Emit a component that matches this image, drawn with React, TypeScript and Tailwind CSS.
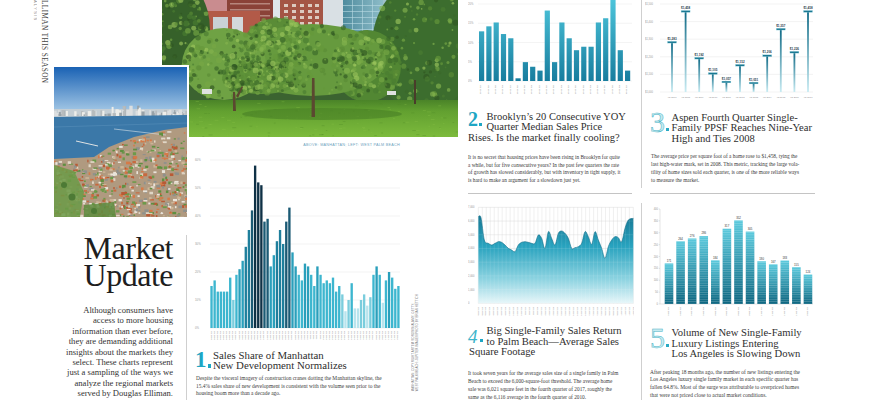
import React from 'react'

function rng(seed: number) {
  let s = seed
  return () => {
    s = (s * 16807) % 2147483647
    return (s - 1) / 2147483646
  }
}

function smooth(p: number[][]) {
  let d = `M${p[0][0]},${p[0][1]}`
  for (let i = 0; i < p.length - 1; i++) {
    const p0 = p[i - 1] || p[i]
    const p1 = p[i]
    const p2 = p[i + 1]
    const p3 = p[i + 2] || p2
    const c1x = p1[0] + (p2[0] - p0[0]) / 6
    const c1y = p1[1] + (p2[1] - p0[1]) / 6
    const c2x = p2[0] - (p3[0] - p1[0]) / 6
    const c2y = p2[1] - (p3[1] - p1[1]) / 6
    d += ` C${c1x},${c1y} ${c2x},${c2y} ${p2[0]},${p2[1]}`
  }
  return d
}

const sans = { fontFamily: 'Liberation Sans, Arial, sans-serif' }

// ---------- charts ----------

const manhattan = [15, 17, 13, 13, 13, 13, 18, 10, 19, 21, 24, 29, 35, 42, 58, 52, 51, 38, 39, 22, 26, 31, 35, 30, 38, 43, 27, 22, 19, 17, 23, 22, 19, 15, 22, 19, 16, 17, 16, 18, 13, 15, 12, 6, 10, 16, 7, 7, 10, 12, 8, 11, 19, 22, 19, 9, 17, 20, 18, 14, 15]

function barColor(v: number) {
  if (v >= 45) return '#0f3146'
  if (v >= 36) return '#1b5a74'
  if (v >= 28) return '#1f7f9c'
  if (v >= 20) return '#2a9fbb'
  if (v >= 13) return '#3db6cf'
  if (v >= 10) return '#7bcddd'
  return '#b8e4ed'
}

function Chart1() {
  const x0 = 17
  const pitch = 190 / 61
  const y = (v: number) => 173 - v * 2.8
  return (
    <svg width={215} height={190} className="block" style={sans}>
      {[0, 10, 20, 30, 40, 50, 60].map((v) => (
        <g key={v}>
          <line x1={x0} x2={207} y1={y(v)} y2={y(v)} stroke="#dedede" strokeWidth={0.4} />
          <text x={2} y={y(v) + 1} fontSize={2.8} fill="#9a9a9a">{v}%</text>
        </g>
      ))}
      {manhattan.map((v, i) => (
        <rect key={i} x={x0 + i * pitch + 0.35} y={y(v)} width={2.35} height={v * 2.8} fill={barColor(v)} />
      ))}
      {manhattan.map((_, i) => (
        <text key={'t' + i} transform={`translate(${x0 + i * pitch + 0.5},176) rotate(90)`} fontSize={2.3} fill="#8c8c8c">
          {`${(i % 4) + 1}Q ${2003 + Math.floor(i / 4)}`}
        </text>
      ))}
    </svg>
  )
}

function Chart2() {
  const data = [12.9, 14.2, 15.2, 12.2, 11.1, 0.7, 4.9, 3.7, 2.7, 18.3, 4.9, 15.2, 11.1, 8, 8.9, 8.9, 15.2, 16.3, 22, 8, 2.7]
  const y = (v: number) => 81 - v * 3.85
  return (
    <svg width={164} height={100} className="block" style={sans}>
      <defs>
        <linearGradient id="g2" x1="0" y1="0" x2="0" y2="81" gradientUnits="userSpaceOnUse">
          <stop offset="0" stopColor="#4cc4da" />
          <stop offset="1" stopColor="#187d9e" />
        </linearGradient>
      </defs>
      {[0, 5, 10, 15, 20].map((v) => (
        <g key={v}>
          <line x1={10} x2={164} y1={y(v)} y2={y(v)} stroke="#e2e2e2" strokeWidth={0.4} />
          <text x={0} y={y(v) + 1} fontSize={2.7} fill="#9a9a9a">{v}%</text>
        </g>
      ))}
      {data.map((v, i) => (
        <rect key={i} x={11 + i * 7.3} y={y(v)} width={5.2} height={81 - y(v)} fill="url(#g2)" />
      ))}
      {data.map((_, i) => (
        <text key={'t' + i} transform={`translate(${12.3 + i * 7.3},85) rotate(90)`} fontSize={2.4} fill="#8c8c8c">
          {`${(i % 4) + 1}Q ${2013 + Math.floor(i / 4)}`}
        </text>
      ))}
    </svg>
  )
}

function Chart3() {
  const data = [1283, 1458, 1192, 1105, 1057, 1152, 1051, 1206, 1357, 1226, 1458]
  const y = (v: number) => 92 - (v - 1000) * 0.176
  return (
    <svg width={170} height={100} className="block" style={sans}>
      <defs>
        <linearGradient id="g3" x1="0" y1="0" x2="0" y2="1">
          <stop offset="0" stopColor="#0f6a86" />
          <stop offset="1" stopColor="#c9ecf3" />
        </linearGradient>
      </defs>
      {[1000, 1100, 1200, 1300, 1400, 1500].map((v) => (
        <g key={v}>
          <line x1={15} x2={168} y1={y(v)} y2={y(v)} stroke="#e0e0e0" strokeWidth={0.4} />
          <text x={0} y={y(v) + 1} fontSize={2.6} fill="#9a9a9a">{`$${v.toLocaleString('en-US')}`}</text>
        </g>
      ))}
      {data.map((v, i) => {
        const cx = 27 + i * 13.6
        return (
          <g key={i}>
            <rect x={cx - 0.9} y={y(v)} width={1.8} height={92 - y(v)} fill="url(#g3)" />
            <rect x={cx - 4.5} y={y(v) - 0.9} width={9} height={1.8} fill="#1b7892" stroke="#9fdbe6" strokeWidth={0.3} />
            <text x={cx} y={y(v) - 2.4} fontSize={3} fontWeight="bold" fill="#1f3c4a" textAnchor="middle">{`$${v.toLocaleString('en-US')}`}</text>
            <text x={cx} y={98} fontSize={2.3} fill="#8c8c8c" textAnchor="middle">{`4Q ${2007 + i}`}</text>
          </g>
        )
      })}
    </svg>
  )
}

const area4 = [[70, 65], [78, 68], [88, 135], [100, 145], [110, 150], [120, 145], [130, 140], [140, 142], [150, 150], [160, 160], [170, 165], [180, 170], [190, 150], [200, 142], [210, 140], [220, 142], [230, 145], [240, 145], [250, 120], [260, 130], [270, 160], [280, 110], [290, 130], [300, 150], [310, 115], [320, 108], [330, 115], [340, 130], [350, 160], [360, 158], [370, 155], [380, 145], [390, 110], [400, 125], [410, 148], [420, 110], [430, 135], [440, 160], [450, 190], [460, 155], [470, 135], [480, 125], [490, 128], [500, 140], [510, 100], [520, 75], [535, 70]].map(([x, y]) => [x / 3 - 13, y / 3 - 5])

function Chart4() {
  const base = 103.3
  const y = (v: number) => base - v * 13.71
  const line = smooth(area4)
  const first = area4[0][0]
  const last = area4[area4.length - 1][0]
  const areaPath = `${line} L${last},${base} L${first},${base} Z`
  const vlines = Array.from({ length: 40 }, (_, i) => first + i * ((last - first) / 39))
  return (
    <svg width={166} height={120} className="block" style={sans}>
      <defs>
        <linearGradient id="g4" x1="0" y1="15" x2="0" y2="103" gradientUnits="userSpaceOnUse">
          <stop offset="0" stopColor="#177793" />
          <stop offset="0.35" stopColor="#27a2be" />
          <stop offset="0.72" stopColor="#8ad2e0" />
          <stop offset="1" stopColor="#e6f6f9" />
        </linearGradient>
        <clipPath id="c4">
          <path d={areaPath} />
        </clipPath>
      </defs>
      {[0, 1, 2, 3, 4, 5, 6, 7].map((v) => (
        <g key={v}>
          <line x1={first} x2={last} y1={y(v)} y2={y(v)} stroke="#d4d4d4" strokeWidth={0.4} />
          <text x={0} y={y(v) + 1} fontSize={2.6} fill="#9a9a9a">{v === 0 ? '0' : `${v},000`}</text>
        </g>
      ))}
      {vlines.map((x, i) => (
        <line key={i} x1={x} x2={x} y1={y(7)} y2={base} stroke="#d4d4d4" strokeWidth={0.35} />
      ))}
      <path d={areaPath} fill="url(#g4)" />
      <g clipPath="url(#c4)">
        {vlines.map((x, i) => (
          <line key={i} x1={x} x2={x} y1={0} y2={base} stroke="#ffffff" strokeOpacity={0.3} strokeWidth={0.35} />
        ))}
        {[1, 2, 3, 4, 5, 6].map((v) => (
          <line key={v} x1={first} x2={last} y1={y(v)} y2={y(v)} stroke="#ffffff" strokeOpacity={0.3} strokeWidth={0.35} />
        ))}
      </g>
      <path d={line} fill="none" stroke="#136f8a" strokeWidth={0.6} />
      {vlines.map((x, i) => (
        <text key={'t' + i} transform={`translate(${x - 0.8},107) rotate(90)`} fontSize={2.2} fill="#8c8c8c">
          {`${(i % 4) + 1}Q ${2008 + Math.floor(i / 4)}`}
        </text>
      ))}
    </svg>
  )
}

function Chart5() {
  const data = [171, 264, 276, 286, 184, 317, 352, 305, 180, 167, 183, 155, 124]
  const base = 104
  const y = (v: number) => base - v * 0.2375
  return (
    <svg width={170} height={120} className="block" style={sans}>
      <defs>
        <linearGradient id="g5" x1="0" y1="0" x2="0" y2="1">
          <stop offset="0" stopColor="#5ccadd" />
          <stop offset="1" stopColor="#0e6680" />
        </linearGradient>
        <pattern id="p5" width="4" height="2.3" patternUnits="userSpaceOnUse">
          <rect width="4" height="0.45" fill="#ffffff" opacity="0.35" />
        </pattern>
      </defs>
      <line x1={15} x2={15} y1={y(400)} y2={base} stroke="#bdbdbd" strokeWidth={0.4} />
      <line x1={15} x2={168} y1={base} y2={base} stroke="#bdbdbd" strokeWidth={0.4} />
      {[0, 50, 100, 150, 200, 250, 300, 350, 400].map((v) => (
        <g key={v}>
          <line x1={13.8} x2={15} y1={y(v)} y2={y(v)} stroke="#bdbdbd" strokeWidth={0.4} />
          <text x={13} y={y(v) + 1} fontSize={2.6} fill="#9a9a9a" textAnchor="end">{v}</text>
        </g>
      ))}
      {data.map((v, i) => {
        const cx = 24 + i * 11.58
        return (
          <g key={i}>
            <rect x={cx - 4.3} y={y(v)} width={8.6} height={base - y(v)} fill="url(#g5)" />
            <rect x={cx - 4.3} y={y(v)} width={8.6} height={base - y(v)} fill="url(#p5)" />
            <text x={cx} y={y(v) - 1.6} fontSize={2.8} fill="#333" textAnchor="middle">{v}</text>
            <text transform={`translate(${cx - 0.8},107) rotate(90)`} fontSize={2.3} fill="#8c8c8c">
              {`${(i % 4) + 1}Q ${2015 + Math.floor(i / 4)}`}
            </text>
          </g>
        )
      })}
    </svg>
  )
}

// ---------- photos ----------

function ParkPhoto() {
  const r = rng(11)
  const pal = ['#4a7c31', '#65983b', '#84b44e', '#5a8c35', '#3b6829', '#76a845', '#9bc45c', '#2f5622']
  const blobs: [number, number, number, number, string][] = [
    [16, 30, 32, 50, '#36612a'],
    [262, 46, 52, 66, '#3c6d2e'],
    [116, 44, 34, 26, '#5a8c37'],
    [205, 66, 34, 36, '#528733'],
    [150, 60, 74, 36, '#669a3e'],
    [62, 64, 42, 36, '#6fa244'],
    [100, 78, 40, 16, '#5e9239'],
  ]
  const dots: React.ReactNode[] = []
  blobs.forEach(([cx, cy, rx, ry], bi) => {
    for (let i = 0; i < 150; i++) {
      const a = r() * Math.PI * 2
      const d = Math.sqrt(r())
      dots.push(
        <circle
          key={bi + '-' + i}
          cx={cx + Math.cos(a) * rx * d}
          cy={cy + Math.sin(a) * ry * d}
          r={0.8 + r() * 2.2}
          fill={pal[Math.floor(r() * pal.length)]}
          opacity={0.65}
        />,
      )
    }
  })
  const grassDots: React.ReactNode[] = []
  for (let i = 0; i < 140; i++) {
    grassDots.push(
      <rect key={i} x={r() * 296} y={101 + r() * 36} width={1 + r() * 3} height={0.6} fill={r() > 0.5 ? '#8cc447' : '#4f8a28'} opacity={0.5} />,
    )
  }
  return (
    <svg width={296} height={137} className="block shrink-0">
      <defs>
        <linearGradient id="grass" x1="0" y1="0" x2="0" y2="1">
          <stop offset="0" stopColor="#4a8328" />
          <stop offset="0.3" stopColor="#62a030" />
          <stop offset="1" stopColor="#7dbb3d" />
        </linearGradient>
        <linearGradient id="glass" x1="0" y1="0" x2="1" y2="0">
          <stop offset="0" stopColor="#4f8c9e" />
          <stop offset="1" stopColor="#8dbcc8" />
        </linearGradient>
      </defs>
      <rect width={296} height={137} fill="#dfe7ea" />
      <rect x={41} y={0} width={24} height={14} fill="#c98c8f" />
      <rect x={65} y={0} width={46} height={32} fill="#8a4238" />
      {[3, 9, 15, 21, 27].map((wy) => (
        <rect key={wy} x={68} y={wy} width={40} height={1.5} fill="#c9a49a" opacity={0.7} />
      ))}
      <rect x={26} y={11} width={72} height={30} fill="#b25a48" />
      <rect x={31} y={17} width={15} height={19} fill="#d6dcdf" />
      <rect x={51} y={17} width={15} height={19} fill="#c9d1d6" />
      <rect x={70} y={17} width={11} height={19} fill="#d3d9dc" />
      <rect x={118} y={0} width={43} height={32} fill="#a45545" />
      {[4, 10, 16, 22].map((wy) =>
        [122, 130, 138, 146, 153].map((wx) => <rect key={wx + '-' + wy} x={wx} y={wy} width={4} height={3} fill="#dccac0" />),
      )}
      <rect x={161} y={0} width={20} height={32} fill="#d9e0e4" />
      <rect x={181} y={0} width={40} height={36} fill="url(#glass)" />
      {[5, 11, 17, 23, 29].map((gy) => (
        <rect key={gy} x={181} y={gy} width={40} height={0.6} fill="#b9dbe3" />
      ))}
      {[190, 200, 210].map((gx) => (
        <rect key={gx} x={gx} y={0} width={0.6} height={36} fill="#b9dbe3" />
      ))}
      <rect x={221} y={0} width={22} height={18} fill="#9dc0c9" />
      <rect x={20} y={84} width={270} height={18} fill="#3b6330" />
      <rect x={238} y={0} width={58} height={100} fill="#3a6a2c" />
      <rect x={0} y={0} width={20} height={75} fill="#33602a" />
      {blobs.map(([cx, cy, rx, ry, c], i) => (
        <ellipse key={i} cx={cx} cy={cy} rx={rx} ry={ry} fill={c} />
      ))}
      {dots}
      <rect x={40} y={89} width={10} height={5} fill="#dfe2e0" />
      <rect x={225} y={91} width={9} height={4} fill="#dfe2e0" />
      <rect x={0} y={100} width={296} height={37} fill="url(#grass)" />
      {grassDots}
      <ellipse cx={160} cy={114} rx={80} ry={6} fill="#457c24" opacity={0.55} />
      <path d="M150,78 L152.5,78 L153,117 L149.5,117 Z" fill="#5b4830" />
      <path d="M71,92 L73,92 L74,111 L71,111 Z" fill="#5b4830" />
      <path d="M74,96 L80,86 L81,87 L76,98 Z" fill="#5b4830" />
      <path d="M252,80 L254,80 L254,104 L252,104 Z" fill="#4a3c2a" />
    </svg>
  )
}

function AerialPhoto() {
  const r = rng(5)
  const waterEdge = (x: number) => {
    const pts = [[0, 92], [40, 90], [55, 80], [80, 70], [110, 63], [133, 60]]
    for (let i = 0; i < pts.length - 1; i++) {
      const [x1, y1] = pts[i]
      const [x2, y2] = pts[i + 1]
      if (x >= x1 && x <= x2) return y1 + ((y2 - y1) * (x - x1)) / (x2 - x1)
    }
    return 60
  }
  const pal = ['#c7693f', '#b85a35', '#e9e4da', '#e0d6c6', '#cdb597', '#5f8f40', '#8f918c', '#d57a48', '#6d9a4a']
  const blds: React.ReactNode[] = []
  for (let i = 0; i < 900; i++) {
    const x = r() * 133
    const y = 58 + r() * 94
    if (y < waterEdge(x) + 1) continue
    const w = 1.2 + r() * 3
    const h = 1 + r() * 2
    blds.push(<rect key={i} x={x} y={y} width={w} height={h} fill={pal[Math.floor(r() * pal.length)]} />)
  }
  const sky: React.ReactNode[] = []
  for (let i = 0; i < 80; i++) {
    const x = r() * 133
    const h = 1.5 + r() * (x > 55 && x < 85 ? 9 : 5)
    sky.push(<rect key={i} x={x} y={49 - h} width={1 + r() * 2.5} height={h} fill={['#dcdfe0', '#b7bcbe', '#eeeeea', '#98a2a8'][i % 4]} />)
  }
  return (
    <svg width={133} height={150} className="block">
      <defs>
        <linearGradient id="sky" x1="0" y1="0" x2="0" y2="1">
          <stop offset="0" stopColor="#1a62b4" />
          <stop offset="1" stopColor="#a8cbe7" />
        </linearGradient>
      </defs>
      <rect width={133} height={150} fill="#b09a80" />
      <rect width={133} height={46} fill="url(#sky)" />
      <rect y={42} width={133} height={8} fill="#c4ced4" />
      {sky}
      <path d="M0,50 L133,48 L133,60 L110,63 L80,70 L55,80 L40,90 L0,92 Z" fill="#3b78a8" />
      <path d="M0,60 L133,56" stroke="#5d93bd" strokeWidth={0.5} />
      <path d="M60,62 L112,68" stroke="#d9e3ea" strokeWidth={0.6} />
      <path d="M22,74 L44,79" stroke="#dfe3e4" strokeWidth={1} />
      {blds}
      <path d="M0,98 L20,104 L30,125 L26,150 L0,150 Z" fill="#6b9a46" opacity={0.85} />
      <path d="M30,138 L60,135 L62,150 L30,150 Z" fill="#5e8c3e" opacity={0.85} />
      <circle cx={10} cy={118} r={3} fill="#4d7a35" />
      <circle cx={18} cy={130} r={3.5} fill="#4d7a35" />
      <circle cx={40} cy={144} r={3} fill="#4d7a35" />
    </svg>
  )
}

// ---------- text bits ----------

function Body({ lines, cls }: { lines: string[]; cls: string }) {
  return (
    <div className={`text-[#3a3a3a] whitespace-nowrap ${cls}`}>
      {lines.map((l, i) => (
        <div key={i}>{l}</div>
      ))}
    </div>
  )
}

const outline = 'text-[#c6eaf0] [-webkit-text-stroke:0.5px_#48b3c6]'

export default function App() {
  return (
    <div className="w-[870px] h-[400px] overflow-hidden bg-white flex font-['Liberation_Serif',serif] text-[#2e2e2e]">
      {/* left page */}
      <div className="relative w-[458px] h-[400px] shrink-0 flex flex-col">
        <div className="flex h-[137px] shrink-0">
          <div className="w-[162px] flex pl-[33px] gap-[3px]">
            <div className="[writing-mode:vertical-rl] text-[4px] tracking-[1.3px] text-[#8a8a8a] leading-none h-[26px] overflow-hidden font-['Liberation_Sans',sans-serif]">
              ALYSIS
            </div>
            <div className="[writing-mode:vertical-rl] text-[7.2px] tracking-[0.45px] text-[#444] leading-none whitespace-nowrap">
              LLIMAN THIS SEASON
            </div>
          </div>
          <ParkPhoto />
        </div>
        <div className="absolute left-[52px] top-[65px] bg-white p-[2px]">
          <AerialPhoto />
        </div>
        <div className="flex flex-1">
          <div className="w-[187px] shrink-0 pt-[91px]">
            <div className="h-full border-r border-[#cfcfcf] pr-[13px] text-right">
              <div className="mt-[7px] text-[32px] leading-[27px] tracking-[-0.5px] text-[#1e1e1e]">
                <div>Market</div>
                <div>Update</div>
              </div>
              <div className="mt-[16px] text-[8.6px] leading-[10.4px] text-[#333] whitespace-nowrap">
                <div>Although consumers have</div>
                <div>access to more housing</div>
                <div>information than ever before,</div>
                <div>they are demanding additional</div>
                <div>insights about the markets they</div>
                <div>select. These charts represent</div>
                <div>just a sampling of the ways we</div>
                <div>analyze the regional markets</div>
                <div>served by Douglas Elliman.</div>
              </div>
            </div>
          </div>
          <div className="flex">
            <div className="w-[215px] ml-[6px] flex flex-col">
              <div className="h-[18px] pt-[7px] pr-[8px] text-right text-[3.7px] leading-none tracking-[0.3px] text-[#6d9fbd] font-['Liberation_Sans',sans-serif]">
                ABOVE: MANHATTAN; LEFT: WEST PALM BEACH
              </div>
              <Chart1 />
              <div className="flex items-start mt-[6px] ml-[2px]">
                <div className="flex items-end text-[23px] leading-[18px] font-bold text-[#1ea6c4]">
                  1<span className="w-[3.5px] h-[3.5px] bg-[#1ea6c4] mb-[1.5px] ml-[1px]" />
                </div>
                <div className="ml-[2px] text-[10.8px] leading-[9.5px] whitespace-nowrap">
                  <div>Sales Share of Manhattan</div>
                  <div>New Development Normalizes</div>
                </div>
              </div>
              <Body
                cls="mt-[5px] ml-[3px] text-[5.4px] leading-[7.5px]"
                lines={[
                  'Despite the visceral imagery of construction cranes dotting the Manhattan skyline, the',
                  '15.4% sales share of new development is consistent with the volume seen prior to the',
                  'housing boom more than a decade ago.',
                ]}
              />
            </div>
            <div className="ml-[3px] pt-[157px]">
              <div className="rotate-180 [writing-mode:vertical-rl] text-[2.9px] leading-[4px] tracking-[0.1px] text-[#777] whitespace-nowrap font-['Liberation_Sans',sans-serif]">
                <div>MANHATTAN: COPYRIGHT ARTEM VORONIN/ALAMY; GETTY;</div>
                <div>WEST PALM BEACH: JUPITER IMAGES/PHOTO BY BRIAN HETTICH</div>
              </div>
            </div>
          </div>
        </div>
      </div>

      {/* right page */}
      <div className="w-[412px] shrink-0 flex flex-col">
        <div className="flex h-[194px] pl-[10px] shrink-0">
          <div className="w-[164px] h-[194px] border-b border-[#c4c4c4] flex flex-col">
            <Chart2 />
            <div className="flex items-start mt-[12px]">
              <div className="flex items-end text-[20px] leading-[15px] font-bold text-[#1ea6c4]">
                2<span className="w-[3px] h-[3px] bg-[#1ea6c4] mb-[1.5px] ml-[0.5px]" />
              </div>
              <div className="ml-[5px] text-[10.5px] leading-[9.5px] whitespace-nowrap">
                <div>Brooklyn’s 20 Consecutive YOY</div>
                <div>Quarter Median Sales Price</div>
              </div>
            </div>
            <div className="mt-[2px] text-[10.5px] leading-[10px] whitespace-nowrap">Rises. Is the market finally cooling?</div>
            <Body
              cls="mt-[11px] text-[5.3px] leading-[7.7px]"
              lines={[
                'It is no secret that housing prices have been rising in Brooklyn for quite',
                'a while, but for five consecutive years? In the past few quarters the rate',
                'of growth has slowed considerably, but with inventory in tight supply, it',
                'is hard to make an argument for a slowdown just yet.',
              ]}
            />
          </div>
          <div className="ml-[9px] w-px h-[188px] bg-[#cfcfcf]" />
          <div className="ml-[8px] w-[165px] h-[194px] border-b border-[#c4c4c4] flex flex-col">
            <div className="-ml-[5px]">
              <Chart3 />
            </div>
            <div className="flex items-start mt-[11px]">
              <div className={`flex items-end text-[30px] leading-[22px] ${outline}`}>
                3<span className="w-[3px] h-[3px] bg-[#2aa9c3] mb-[2px] ml-[0.5px]" />
              </div>
              <div className="ml-[3px] mt-[1.5px] text-[10.6px] leading-[10.5px] whitespace-nowrap">
                <div>Aspen Fourth Quarter Single-</div>
                <div>Family PPSF Reaches Nine-Year</div>
                <div>High and Ties 2008</div>
              </div>
            </div>
            <Body
              cls="mt-[8px] ml-[1px] text-[5.3px] leading-[8px]"
              lines={[
                'The average price per square foot of a home rose to $1,458, tying the',
                'last high-water mark, set in 2008. This metric, tracking the large vola-',
                'tility of home sizes sold each quarter, is one of the more reliable ways',
                'to measure the market.',
              ]}
            />
          </div>
        </div>

        <div className="flex pl-[10px] pt-[6px] flex-1">
          <div className="w-[164px] flex flex-col">
            <Chart4 />
            <div className="flex items-start mt-[6px]">
              <div className="flex items-end mt-[2.5px] text-[19px] leading-[15px] italic text-[#3cb4ca]">
                4<span className="w-[3px] h-[3px] bg-[#1ea6c4] mb-[1.5px] ml-[2px]" />
              </div>
              <div className="ml-[4px] text-[10.6px] leading-[10.5px] whitespace-nowrap">
                <div>Big Single-Family Sales Return</div>
                <div>to Palm Beach—Average Sales</div>
              </div>
            </div>
            <div className="ml-[1px] text-[10.6px] leading-[10.5px] whitespace-nowrap">Square Footage</div>
            <Body
              cls="mt-[11px] text-[5.3px] leading-[8px]"
              lines={[
                'It took seven years for the average sales size of a single family in Palm',
                'Beach to exceed the 6,000-square-foot threshold.  The average home',
                'sale was 6,021 square feet in the fourth quarter of 2017, roughly the',
                'same as the 6,116 average in the fourth quarter of 2010.',
              ]}
            />
          </div>
          <div className="ml-[9px] mt-[3px] w-px h-[200px] bg-[#cfcfcf]" />
          <div className="ml-[8px] w-[165px] flex flex-col">
            <div className="-ml-[5px]">
              <Chart5 />
            </div>
            <div className="flex items-start mt-[7px]">
              <div className={`flex items-end text-[30px] leading-[22px] ${outline}`}>
                5<span className="w-[3px] h-[3px] bg-[#2aa9c3] mb-[2px] ml-[0.5px]" />
              </div>
              <div className="ml-[3px] mt-[1px] text-[10.6px] leading-[10.5px] whitespace-nowrap">
                <div>Volume of New Single-Family</div>
                <div>Luxury Listings Entering</div>
                <div>Los Angeles is Slowing Down</div>
              </div>
            </div>
            <Body
              cls="mt-[9px] text-[5.4px] leading-[7.7px]"
              lines={[
                'After peaking 18 months ago, the number of new listings entering the',
                'Los Angeles luxury single family market in each specific quarter has',
                'fallen 64.8%. Most of the surge was attributable to overpriced homes',
                'that were not priced close to actual market conditions.',
              ]}
            />
          </div>
        </div>
      </div>
    </div>
  )
}
